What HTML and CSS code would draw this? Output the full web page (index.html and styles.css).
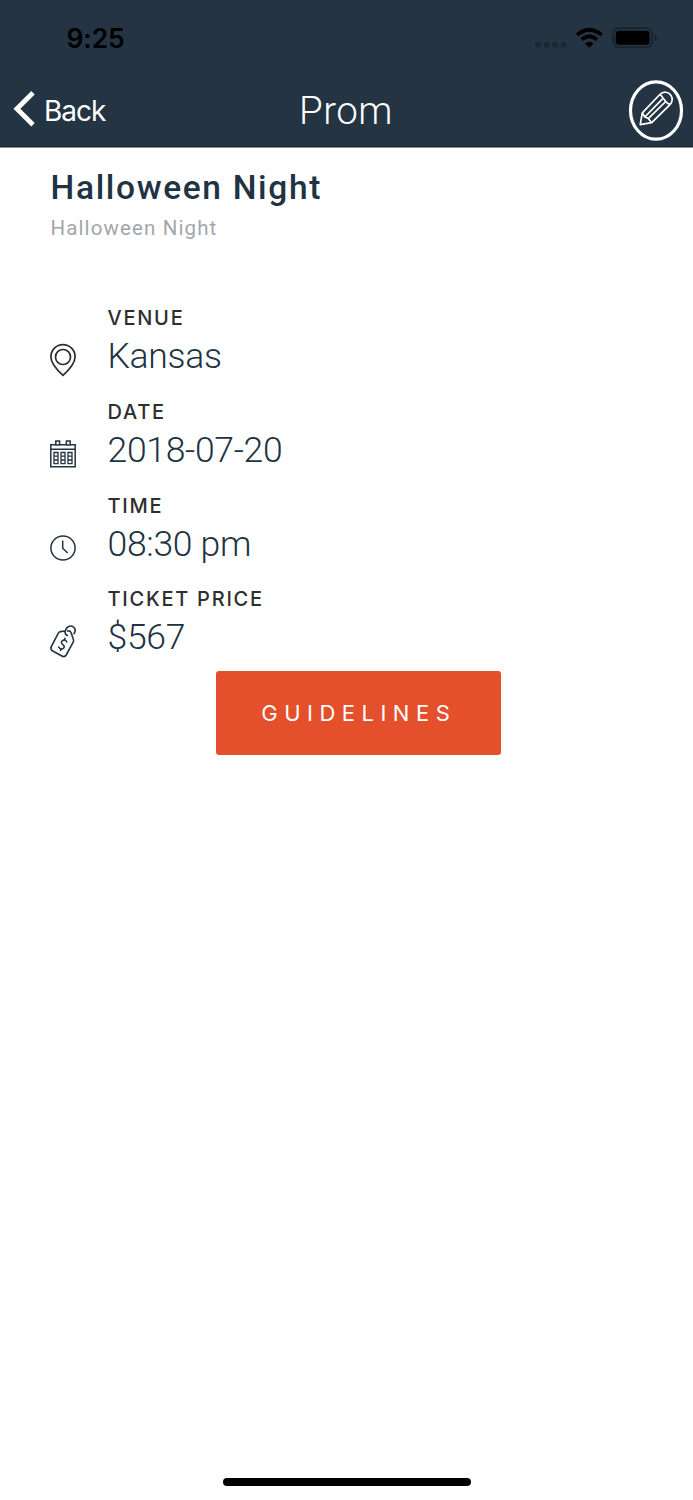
FILE: index.html
```html
<!DOCTYPE html>
<html lang="en">
<head>
<meta charset="utf-8">
<title>Prom</title>
<link rel="stylesheet" href="styles.css">
</head>
<body>
<div class="screen">
  <header class="header">
    <div class="status">
      <span class="clock">9:25</span>
      <svg class="indicators" width="122" height="24" viewBox="535 26 122 24">
        <g fill="#1b2834"><rect x="535.5" y="42" width="5.6" height="5.6" rx="2"/><rect x="543.8" y="42" width="5.6" height="5.6" rx="2"/><rect x="552.2" y="42" width="5.6" height="5.6" rx="2"/><rect x="560.6" y="42" width="5.6" height="5.6" rx="2"/></g>
        <path d="M577 34.900Q589.300 24.500 601.600 34.900" fill="none" stroke="#000" stroke-width="3.800"/>
        <path d="M581.700 39.700Q589.300 33.200 596.900 39.700" fill="none" stroke="#000" stroke-width="3.600"/>
        <path d="M585 43.400Q589.300 39.900 593.600 43.400L589.300 47.700Z"/>
        <rect x="613.400" y="28.100" width="38.800" height="19.100" rx="5.500" fill="none" stroke="#17222d" stroke-width="1.600"/>
        <rect x="615.800" y="30.700" width="33.700" height="14" rx="3"/>
        <path d="M654.400 34.300Q657 35.400 657 37.700T654.400 41.100Z" fill="#17222d"/>
      </svg>
    </div>
    <nav class="nav">
      <a class="back"><svg class="chevron" width="22" height="36" viewBox="0 0 22 36"><path d="M20 1.800L3.900 17.800L20 33.800" fill="none" stroke="#fff" stroke-width="4.800"/></svg><span>Back</span></a>
      <h1 class="title">Prom</h1>
      <a class="edit"><svg width="56" height="62" viewBox="628 80 56 62" fill="none" stroke="#fff">
        <ellipse cx="656" cy="110.500" rx="25.500" ry="28.700" stroke-width="3.200"/>
        <g stroke-width="1.700" stroke-linejoin="round"><path d="M640.200 124.600L642.300 112.800L659.800 94.500C663.500 91 668.500 91.700 671 95.500C672.800 98.500 672.300 102 670 104.600L651.700 122.700L647.300 123.400Z"/><path d="M642.300 112.800L644.800 117L648 118.200L651.700 122.700M659.800 94.500C663.500 96.500 664.200 102.600 670 104.600M644.800 117L662.500 98.800M648 118.800L665.700 101.500"/></g>
      </svg></a>
    </nav>
  </header>
  <main class="content">
    <h2 class="name">Halloween Night</h2>
    <p class="sub">Halloween Night</p>
    <section class="details">
      <div class="row">
        <svg class="icon" width="28" height="36" viewBox="49 342 28 36" fill="none" stroke="#292d2e" stroke-width="1.700"><path d="M63 375.300Q50.900 364.300 50.900 356.700A12.100 12.100 0 0 1 75.100 356.700Q75.100 364.300 63 375.300Z"/><circle cx="63" cy="357" r="7.500"/></svg>
        <div><div class="label">VENUE</div><div class="value">Kansas</div></div>
      </div>
      <div class="row">
        <svg class="icon" width="28" height="36" viewBox="49 435.800 28 36" fill="none" stroke="#233443" stroke-width="1.500"><path d="M55.600 444.500H50.800V466.500H75.200V444.500H70.500M66.400 444.500H59.600M50.800 449H75.200M55.800 440.800H59.600V444.700H55.800ZM66.400 440.800H70.200V444.700H66.400Z"/><path stroke-width="1.300" d="M54 452.300H58V463.500H54ZM61 452.300H65V463.500H61ZM68 452.300H72V463.500H68ZM54 456H58M54 459.800H58M61 456H65M61 459.800H65M68 456H72M68 459.800H72"/></svg>
        <div><div class="label">DATE</div><div class="value">2018-07-20</div></div>
      </div>
      <div class="row">
        <svg class="icon" width="28" height="36" viewBox="49 529.500 28 36" fill="none" stroke="#233443" stroke-width="1.500"><circle cx="63" cy="547.500" r="12.100"/><path d="M62.700 540V547.700L67.700 552.500"/></svg>
        <div><div class="label">TIME</div><div class="value">08:30 pm</div></div>
      </div>
      <div class="row">
        <svg class="icon" width="28" height="36" viewBox="49 623 28 36" fill="none" stroke="#233443" stroke-width="1.600" stroke-linecap="round" stroke-linejoin="round"><path d="M65 631L60.500 631.600Q59 632 58.200 633.300L51.400 646.300Q50.100 649.100 52.300 650.800L61.800 656Q64.600 657.500 66.200 655L73.200 642.200Q73.900 640.900 73.400 639.500L71 632.500Q70.400 631 68.700 630.900L67.500 631"/><path d="M67.400 635.500Q64.300 634.300 65.300 630.700C66.500 627 70.200 624.700 73.300 626.800C75.800 628.800 75.500 631.500 74 633.700"/><path d="M66.700 642Q65.800 639.100 63.200 640.200Q60.500 641.600 62 643.700L63.800 645.500Q65 647.500 62.800 648.700Q59.800 649.700 58.700 647M64.900 638.400L64.200 640.200M61.300 648.800L60.500 650.500"/></svg>
        <div><div class="label">TICKET PRICE</div><div class="value">$567</div></div>
      </div>
    </section>
    <button class="guidelines">GUIDELINES</button>
  </main>
  <div class="home"></div>
</div>
</body>
</html>
```
FILE: styles.css
```css
* { box-sizing: border-box; }
body { margin: 0; background: #fff; font-family: Roboto, sans-serif; }
h1, h2, p { margin: 0; }
svg { display: block; flex: none; }
.screen { display: flex; flex-direction: column; height: 1500px; overflow: hidden; }
.header { height: 148px; background: #243443; border-bottom: 1px solid #8b949c; box-shadow: inset 0 -1px #1a2733; color: #fff; }
.status { display: flex; justify-content: space-between; align-items: flex-start; height: 73px; padding: 26px 36px 0 66.500px; }
.clock { font: 600 26.500px/25px Inter, sans-serif; color: #000; letter-spacing: -0.100px; }
.nav { display: grid; grid-template-columns: 1fr auto 1fr; align-items: center; height: 75px; padding: 0 9px 0 13px; }
.back { display: flex; align-items: center; gap: 9px; font: 400 28px/36px Inter, sans-serif; letter-spacing: -1px; }
.chevron { margin-bottom: 3px; }
.title { padding-right: 5px; font-weight: 300; font-size: 38.500px; line-height: 44px; letter-spacing: 0.500px; }
.edit { justify-self: end; }
.content { flex: 1; display: flex; flex-direction: column; }
.name { margin: 20px 0 0 50.500px; font-size: 33.500px; line-height: 40px; font-weight: 500; letter-spacing: 1.650px; color: #213342; }
.sub { margin: 7px 0 0 50.500px; font-size: 20.500px; line-height: 26px; letter-spacing: 1.120px; color: #a2a6aa; }
.details { padding: 64px 0 0 49px; }
.row { display: flex; gap: 30.500px; height: 93.750px; }
.icon { margin-top: 37px; }
.label { font: 450 20px/26px Inter, sans-serif; letter-spacing: 1.750px; color: #2e2e2e; white-space: nowrap; }
.value { font-weight: 300; font-size: 35.500px; line-height: 50px; letter-spacing: -0.300px; color: #213342; white-space: nowrap; }
.guidelines { width: 284.500px; height: 84px; margin: -9px 0 0 216px; padding: 0 0 0 1px; border: 0; border-radius: 3px; background: #e4502b; color: #fff; font: 400 22px/30px Inter, sans-serif; letter-spacing: 6.500px; }
.home { width: 248px; height: 8.500px; margin: 0 auto 14px; border-radius: 5px; background: #000; }
```
